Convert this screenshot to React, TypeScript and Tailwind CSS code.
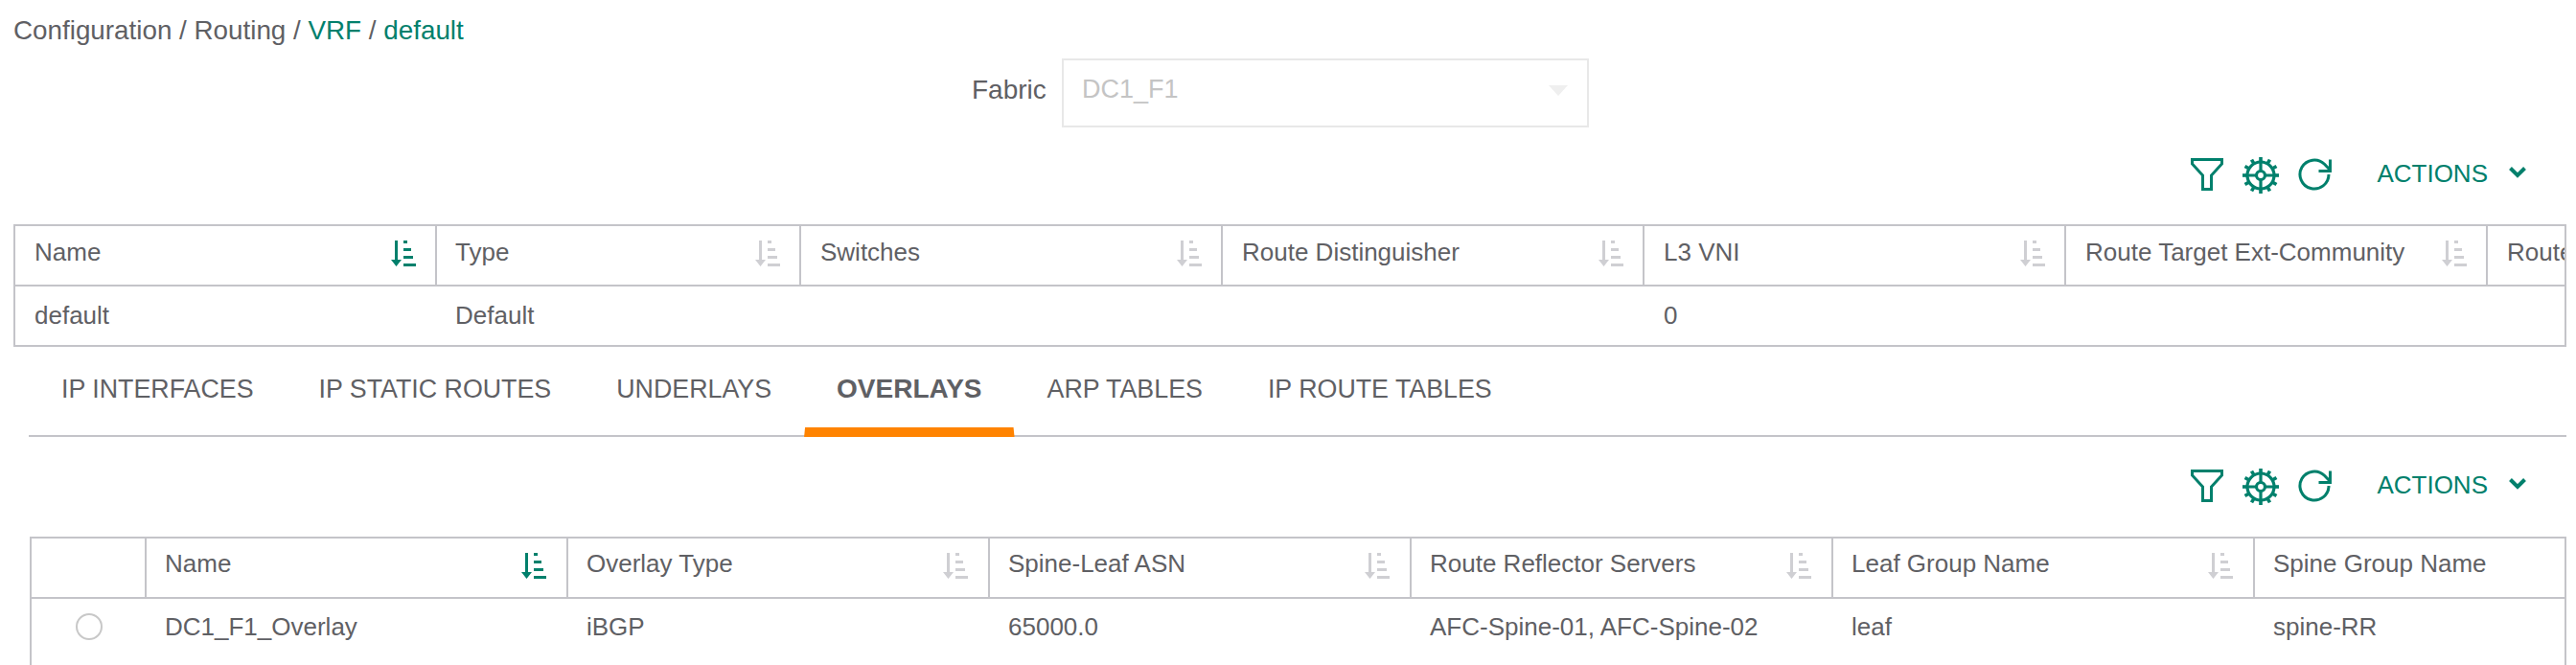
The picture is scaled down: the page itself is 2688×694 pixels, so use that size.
import type { ReactNode } from "react";

const topColumns = [
  { label: "Name", width: "w-[440px]", pad: "pl-[20px] pr-[20px]", active: true },
  { label: "Type", width: "w-[380px]", pad: "pl-[19px] pr-[20px]" },
  { label: "Switches", width: "w-[440px]", pad: "pl-[20px] pr-[20px]" },
  { label: "Route Distinguisher", width: "w-[440px]", pad: "pl-[20px] pr-[20px]" },
  { label: "L3 VNI", width: "w-[440px]", pad: "pl-[20px] pr-[20px]" },
  { label: "Route Target Ext-Community", width: "w-[440px]", pad: "pl-[20px] pr-[20px]" },
];

const overlayColumns = [
  { label: "Name", value: "DC1_F1_Overlay", active: true },
  { label: "Overlay Type", value: "iBGP" },
  { label: "Spine-Leaf ASN", value: "65000.0" },
  { label: "Route Reflector Servers", value: "AFC-Spine-01, AFC-Spine-02" },
  { label: "Leaf Group Name", value: "leaf" },
];

const tabs = ["IP INTERFACES", "IP STATIC ROUTES", "UNDERLAYS", "OVERLAYS", "ARP TABLES", "IP ROUTE TABLES"];

function SortIcon({ active, className }: { active?: boolean; className?: string }) {
  return (
    <svg width="26" height="27" viewBox="0 0 26 27" className={`shrink-0 ${active ? "fill-[#00806c]" : "fill-[#cfcfd3]"} ${className ?? ""}`}>
      <path d="M4 0h3v20h4l-5.500 7L0 20h4z" />
      <rect x="13" y="0" width="4" height="3" />
      <rect x="13" y="8" width="8" height="3" />
      <rect x="13" y="16" width="10" height="3" />
      <rect x="13" y="24" width="13" height="3" />
    </svg>
  );
}

function Gear() {
  const teeth = Array.from({ length: 12 }, (_, i) => i * 30);
  return (
    <svg width="40" height="40" viewBox="0 0 40 40" fill="none" stroke="#00806c" strokeWidth="3.200">
      <circle cx="20" cy="20" r="14" />
      <circle cx="20" cy="20" r="4.500" />
      <path d="M20 6v9.500M20 24.500V34M6 20h9.500M24.500 20H34" />
      {teeth.map((deg) => (
        <path key={deg} d="M20 1v5" strokeWidth="3.600" transform={`rotate(${deg} 20 20)`} />
      ))}
    </svg>
  );
}

function Toolbar() {
  return (
    <div className="flex h-[40px] items-center justify-end pr-[52px] text-[#00806c]">
      <svg width="34" height="34" viewBox="0 0 34 34" fill="none" stroke="#00806c" strokeWidth="3" className="mb-[2px]">
        <path d="M1.500 1.500h31v4.500L21.500 18v14.500h-9V18L1.500 6z" />
      </svg>
      <div className="ml-[19px]">
        <Gear />
      </div>
      <svg width="36" height="36" viewBox="0 0 36 36" fill="none" stroke="#00806c" strokeWidth="3" className="mb-[2px] ml-[19px]">
        <path d="M32 18a15 15 0 1 1-4.500-10.700L33 13" />
        <path d="M33.500 2.500V14.500H21.500" />
      </svg>
      <span className="mb-[5px] ml-[46px] text-[26px] leading-none">ACTIONS</span>
      <svg width="18" height="14" viewBox="0 0 18 14" fill="none" stroke="#00806c" strokeWidth="4" className="mb-[6px] ml-[22px]">
        <path d="M1.500 2.500L9 10l7.500-7.500" />
      </svg>
    </div>
  );
}

function HeaderCell({ label, width, pad, active, last, top }: { label: string; width: string; pad: string; active?: boolean; last?: boolean; top: string }) {
  return (
    <div className={`flex shrink-0 items-start justify-between ${pad} ${top} ${width} ${last ? "" : "border-r-2 border-[#c4c4c9]"}`}>
      <span className="whitespace-nowrap leading-[30px]">{label}</span>
      {!last && <SortIcon active={active} className={top === "pt-[12px]" ? "mt-[3px]" : "mt-[4px]"} />}
    </div>
  );
}

function Row({ children, className }: { children: ReactNode; className?: string }) {
  return <div className={`flex overflow-hidden ${className ?? ""}`}>{children}</div>;
}

export default function App() {
  return (
    <div className="h-[694px] w-[2688px] overflow-hidden bg-white font-['Liberation_Sans',Arial,sans-serif] text-[26px] text-[#5f6064]">
      <div className="h-[61px] pl-[14px] pt-[16px] text-[27.800px] leading-[32px]">
        Configuration / Routing / <span className="text-[#00806c]">VRF</span> / <span className="text-[#00806c]">default</span>
      </div>

      <div className="flex h-[72px] items-start">
        <label className="ml-[1014px] w-[94px] pt-[17px] text-[28px] leading-[32px]">Fabric</label>
        <div className="flex h-[72px] w-[550px] items-start justify-between border-2 border-[#e8e8e8] pl-[19px] pr-[20px] pt-[14px] text-[27px] text-[#c4c4c4]">
          <span className="leading-[32px]">DC1_F1</span>
          <span className="mt-[12px] h-0 w-0 border-x-[10px] border-t-[11px] border-x-transparent border-t-[#efefef]" />
        </div>
      </div>

      <div className="pt-[30px]">
        <Toolbar />
      </div>

      <div className="ml-[14px] mt-[31px] w-[2664px] border-2 border-[#c4c4c9]">
        <Row className="h-[63px] border-b-2 border-[#c4c4c9]">
          {topColumns.map((c) => (
            <HeaderCell key={c.label} {...c} top="pt-[12px]" />
          ))}
          <div className="shrink-0 pl-[20px] pt-[12px] leading-[30px]">Route Target</div>
        </Row>
        <Row className="h-[61px] items-center">
          <div className="w-[440px] shrink-0 pl-[20px]">default</div>
          <div className="w-[380px] shrink-0 pl-[19px]">Default</div>
          <div className="w-[440px] shrink-0" />
          <div className="w-[440px] shrink-0" />
          <div className="w-[440px] shrink-0 pl-[20px]">0</div>
        </Row>
      </div>

      <div className="ml-[30px] mr-[10px] flex h-[94px] items-end border-b-2 border-[#c4c4c9] text-[26.800px]">
        {tabs.map((t) => (
          <div
            key={t}
            className={`relative h-[70px] whitespace-nowrap px-[34px] pt-[6px] leading-[32px] ${t === "OVERLAYS" ? "text-[28px] font-bold" : ""}`}
          >
            {t}
            {t === "OVERLAYS" && (
              <span className="absolute inset-x-0 -bottom-[2px] h-[10px] bg-[#ff8300] [clip-path:polygon(1px_0,calc(100%-1px)_0,100%_100%,0_100%)]" />
            )}
          </div>
        ))}
      </div>

      <div className="pt-[32px]">
        <Toolbar />
      </div>

      <div className="ml-[31px] mt-[32px] w-[2647px] border-x-2 border-t-2 border-[#c4c4c9]">
        <Row className="h-[63px] border-b-2 border-[#c4c4c9]">
          <div className="w-[120px] shrink-0 border-r-2 border-[#c4c4c9]" />
          {overlayColumns.map((c) => (
            <HeaderCell key={c.label} label={c.label} active={c.active} width="w-[440px]" pad="pl-[19px] pr-[21px]" top="pt-[11px]" />
          ))}
          <HeaderCell label="Spine Group Name" width="w-[320px]" pad="pl-[19px] pr-[21px]" top="pt-[11px]" last />
        </Row>
        <Row className="h-[58px] items-center">
          <div className="flex w-[120px] shrink-0 justify-center">
            <span className="h-[28px] w-[28px] rounded-full border-2 border-[#c8c8c8]" />
          </div>
          {overlayColumns.map((c) => (
            <div key={c.label} className="w-[440px] shrink-0 pl-[19px]">
              {c.value}
            </div>
          ))}
          <div className="shrink-0 pl-[19px]">spine-RR</div>
        </Row>
        <div className="h-[12px]" />
      </div>
    </div>
  );
}
